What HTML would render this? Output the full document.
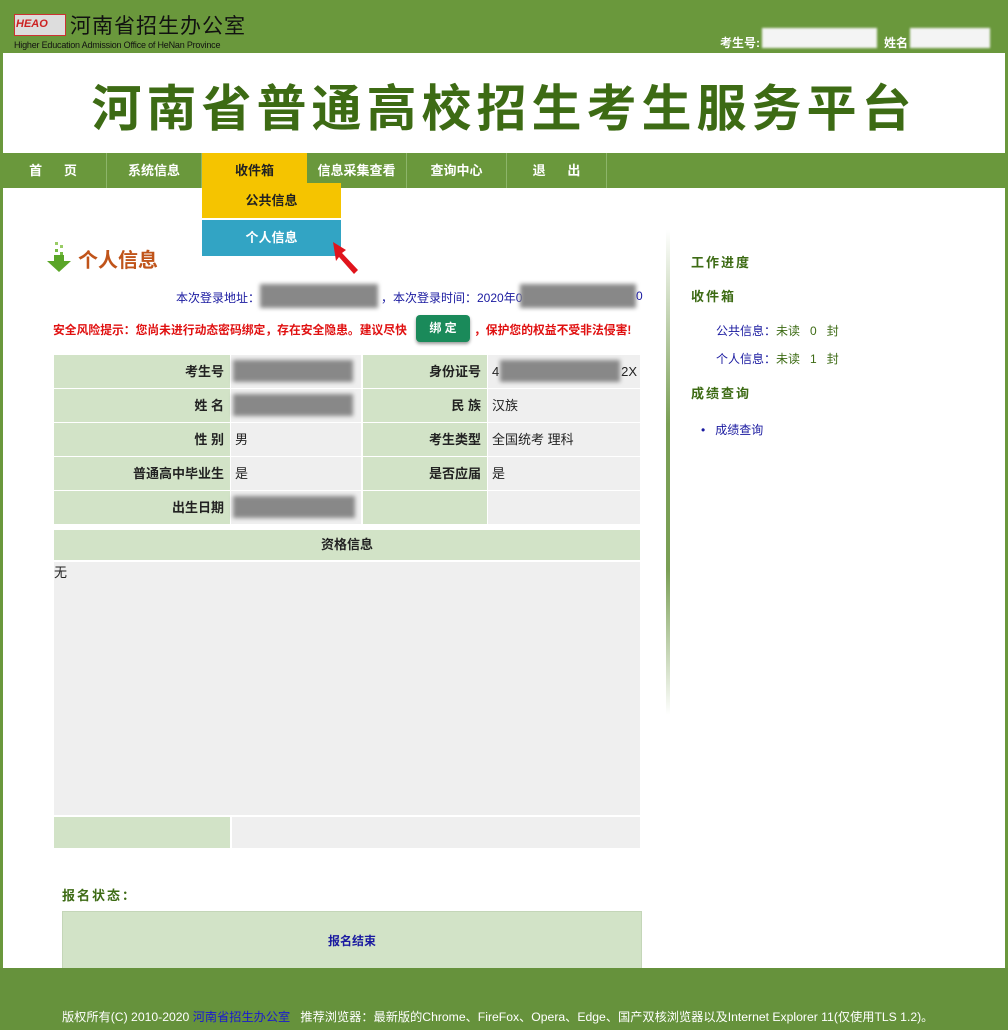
<!DOCTYPE html>
<html><head><meta charset="utf-8">
<style>
*{margin:0;padding:0;box-sizing:border-box}
body{width:1008px;height:1030px;position:relative;background:#fff;font-family:"Liberation Sans","Noto Sans CJK SC",sans-serif;font-size:12px;overflow:hidden}
.abs{position:absolute}
.top{left:0;top:0;width:1008px;height:53px;background:#6a983c}
.side{top:53px;width:3px;height:915px;background:#6a983c}
.title{left:0;width:1008px;top:70px;text-align:center;font-size:50px;font-weight:bold;color:#3d6b14;letter-spacing:5px;line-height:70px;font-family:"Noto Sans CJK SC",sans-serif}
.nav{left:0;top:153px;width:1008px;height:35px;background:#6a983c}
.nav div{position:absolute;top:0;height:35px;line-height:35px;color:#fff;font-weight:bold;font-size:13px;text-align:center;border-right:1px solid #8db56a}
.lbl{background:#d2e3c7;text-align:right;padding-right:6px;font-weight:bold;font-size:13px;line-height:34px;color:#222}
.val{background:#efefef;padding-left:4px;font-size:13px;line-height:34px;color:#222}
.blur{background:#888;filter:blur(2px)}
.rt{font-weight:bold;color:#3d6b14;font-size:13px;letter-spacing:2px}
</style></head><body>
<div class="abs top"></div>
<div class="abs" style="left:14px;top:14px;width:52px;height:22px;border:1px solid #c33;background:#ddd"></div>
<div class="abs" style="left:16px;top:18px;font-size:11px;font-weight:bold;font-style:italic;color:#c22">HEAO</div>
<div class="abs" style="left:70px;top:14px;font-size:21px;color:#111;letter-spacing:1px;line-height:26px">河南省招生办公室</div>
<div class="abs" style="left:14px;top:40px;font-size:9px;color:#111;letter-spacing:-0.2px">Higher Education Admission Office of HeNan Province</div>
<div class="abs" style="left:720px;top:34px;font-size:12px;font-weight:bold;color:#fff">考生号:</div>
<div class="abs" style="left:762px;top:28px;width:115px;height:20px;background:#f4f4f4;filter:blur(1px)"></div>
<div class="abs" style="left:884px;top:34px;font-size:12px;font-weight:bold;color:#fff">姓名</div>
<div class="abs" style="left:910px;top:28px;width:80px;height:20px;background:#f4f4f4;filter:blur(1px)"></div>
<div class="abs side" style="left:0"></div>
<div class="abs side" style="left:1005px"></div>
<div class="abs title">河南省普通高校招生考生服务平台</div>
<div class="abs nav">
<div style="left:0;width:107px">首&nbsp;&nbsp;&nbsp;&nbsp;&nbsp;&nbsp;页</div>
<div style="left:107px;width:95px">系统信息</div>
<div style="left:202px;width:105px;background:#f5c400;color:#222;border:none">收件箱</div>
<div style="left:307px;width:100px">信息采集查看</div>
<div style="left:407px;width:100px">查询中心</div>
<div style="left:507px;width:100px">退&nbsp;&nbsp;&nbsp;&nbsp;&nbsp;&nbsp;出</div>
</div>
<div class="abs" style="left:202px;top:183px;width:139px;height:35px;background:#f5c400;text-align:center;line-height:35px;font-weight:bold;font-size:13px;color:#222">公共信息</div>
<div class="abs" style="left:202px;top:220px;width:139px;height:36px;background:#32a4c4;text-align:center;line-height:36px;font-weight:bold;font-size:13px;color:#fff">个人信息</div>
<svg class="abs" style="left:330px;top:240px" width="32" height="36"><path d="M3 2 L16 10 L12 13 L28 30 L24 34 L9 17 L6 21 Z" fill="#e0141c"/></svg>
<svg class="abs" style="left:46px;top:240px" width="28" height="34"><rect x="9" y="2" width="3" height="3" fill="#9c6"/><rect x="14" y="5" width="3" height="3" fill="#9c6"/><rect x="9" y="9" width="3" height="3" fill="#7b4"/><rect x="14" y="12" width="3" height="3" fill="#7b4"/><path d="M8 15 H18 V21 H25 L13 32 L1 21 H8 Z" fill="#5aa628"/></svg>
<div class="abs" style="left:78px;top:244px;font-size:20px;font-weight:bold;color:#c0541a;font-family:'Noto Sans CJK SC',sans-serif">个人信息</div>
<div class="abs" style="left:176px;top:289px;color:#1a1aa0;font-size:12px">本次登录地址：</div>
<div class="abs blur" style="left:260px;top:284px;width:118px;height:24px"></div>
<div class="abs" style="left:381px;top:289px;color:#1a1aa0;font-size:12px">，本次登录时间：2020年0</div>
<div class="abs blur" style="left:520px;top:284px;width:116px;height:24px"></div>
<div class="abs" style="left:636px;top:289px;color:#1a1aa0">0</div>
<div class="abs" style="left:53px;top:321px;color:#e01010;font-weight:bold;font-size:11.8px">安全风险提示：您尚未进行动态密码绑定，存在安全隐患。建议尽快</div>
<div class="abs" style="left:416px;top:315px;width:54px;height:27px;background:#1a8a5a;border-radius:4px;color:#fff;text-align:center;line-height:27px;font-weight:bold;box-shadow:0 2px 3px #999">绑 定</div>
<div class="abs" style="left:474px;top:321px;color:#e01010;font-weight:bold;font-size:11.8px">，保护您的权益不受非法侵害!</div>

<div class="abs lbl" style="left:54px;top:355px;width:176px;height:33px">考生号</div>
<div class="abs val" style="left:231px;top:355px;width:130px;height:33px"></div>
<div class="abs blur" style="left:233px;top:360px;width:120px;height:22px"></div>
<div class="abs lbl" style="left:363px;top:355px;width:124px;height:33px">身份证号</div>
<div class="abs val" style="left:488px;top:355px;width:152px;height:33px">4<span style="float:right;padding-right:3px">2X</span></div>
<div class="abs blur" style="left:500px;top:360px;width:120px;height:22px"></div>

<div class="abs lbl" style="left:54px;top:389px;width:176px;height:33px">姓 名</div>
<div class="abs val" style="left:231px;top:389px;width:130px;height:33px"></div>
<div class="abs blur" style="left:233px;top:394px;width:120px;height:22px"></div>
<div class="abs lbl" style="left:363px;top:389px;width:124px;height:33px">民 族</div>
<div class="abs val" style="left:488px;top:389px;width:152px;height:33px">汉族</div>

<div class="abs lbl" style="left:54px;top:423px;width:176px;height:33px">性 别</div>
<div class="abs val" style="left:231px;top:423px;width:130px;height:33px">男</div>
<div class="abs lbl" style="left:363px;top:423px;width:124px;height:33px">考生类型</div>
<div class="abs val" style="left:488px;top:423px;width:152px;height:33px">全国统考 理科</div>

<div class="abs lbl" style="left:54px;top:457px;width:176px;height:33px">普通高中毕业生</div>
<div class="abs val" style="left:231px;top:457px;width:130px;height:33px">是</div>
<div class="abs lbl" style="left:363px;top:457px;width:124px;height:33px">是否应届</div>
<div class="abs val" style="left:488px;top:457px;width:152px;height:33px">是</div>

<div class="abs lbl" style="left:54px;top:491px;width:176px;height:33px">出生日期</div>
<div class="abs val" style="left:231px;top:491px;width:130px;height:33px"></div>
<div class="abs blur" style="left:233px;top:496px;width:122px;height:22px"></div>
<div class="abs lbl" style="left:363px;top:491px;width:124px;height:33px"></div>
<div class="abs val" style="left:488px;top:491px;width:152px;height:33px"></div>

<div class="abs lbl" style="left:54px;top:530px;width:586px;height:30px;text-align:center;line-height:30px;padding:0">资格信息</div>
<div class="abs val" style="left:54px;top:562px;width:586px;height:253px;line-height:22px;padding:0">无</div>
<div class="abs lbl" style="left:54px;top:817px;width:176px;height:31px"></div>
<div class="abs val" style="left:232px;top:817px;width:408px;height:31px"></div>

<div class="abs" style="left:62px;top:885px;font-weight:bold;color:#3d6b14;font-size:13px;letter-spacing:2px">报名状态：</div>
<div class="abs" style="left:62px;top:911px;width:580px;height:60px;background:#d2e3c7;border:1px solid #c4d6b8;text-align:center;line-height:58px;color:#1a1aa0;font-weight:bold">报名结束</div>

<div class="abs" style="left:666px;top:230px;width:4px;height:485px;background:linear-gradient(#fff,#7a9f55 40%,#7a9f55 70%,#fff)"></div>
<div class="abs rt" style="left:691px;top:252px">工作进度</div>
<div class="abs rt" style="left:691px;top:286px">收件箱</div>
<div class="abs" style="left:716px;top:322px;color:#1a1aa0">公共信息：<span style="color:#3d6b14">未读&nbsp;&nbsp;&nbsp;0&nbsp;&nbsp;&nbsp;封</span></div>
<div class="abs" style="left:716px;top:350px;color:#1a1aa0">个人信息：<span style="color:#3d6b14">未读&nbsp;&nbsp;&nbsp;1&nbsp;&nbsp;&nbsp;封</span></div>
<div class="abs rt" style="left:691px;top:383px">成绩查询</div>
<div class="abs" style="left:701px;top:421px;color:#1a1aa0">•&nbsp;&nbsp;&nbsp;成绩查询</div>

<div class="abs" style="left:0;top:968px;width:1008px;height:62px;background:#66923c"></div>
<div class="abs" style="left:62px;top:1007px;color:#fff;font-size:12.2px">版权所有(C) 2010-2020 <span style="color:#1a1ad0">河南省招生办公室</span>&nbsp;&nbsp; 推荐浏览器：最新版的Chrome、FireFox、Opera、Edge、国产双核浏览器以及Internet Explorer 11(仅使用TLS 1.2)。</div>
</body></html>
